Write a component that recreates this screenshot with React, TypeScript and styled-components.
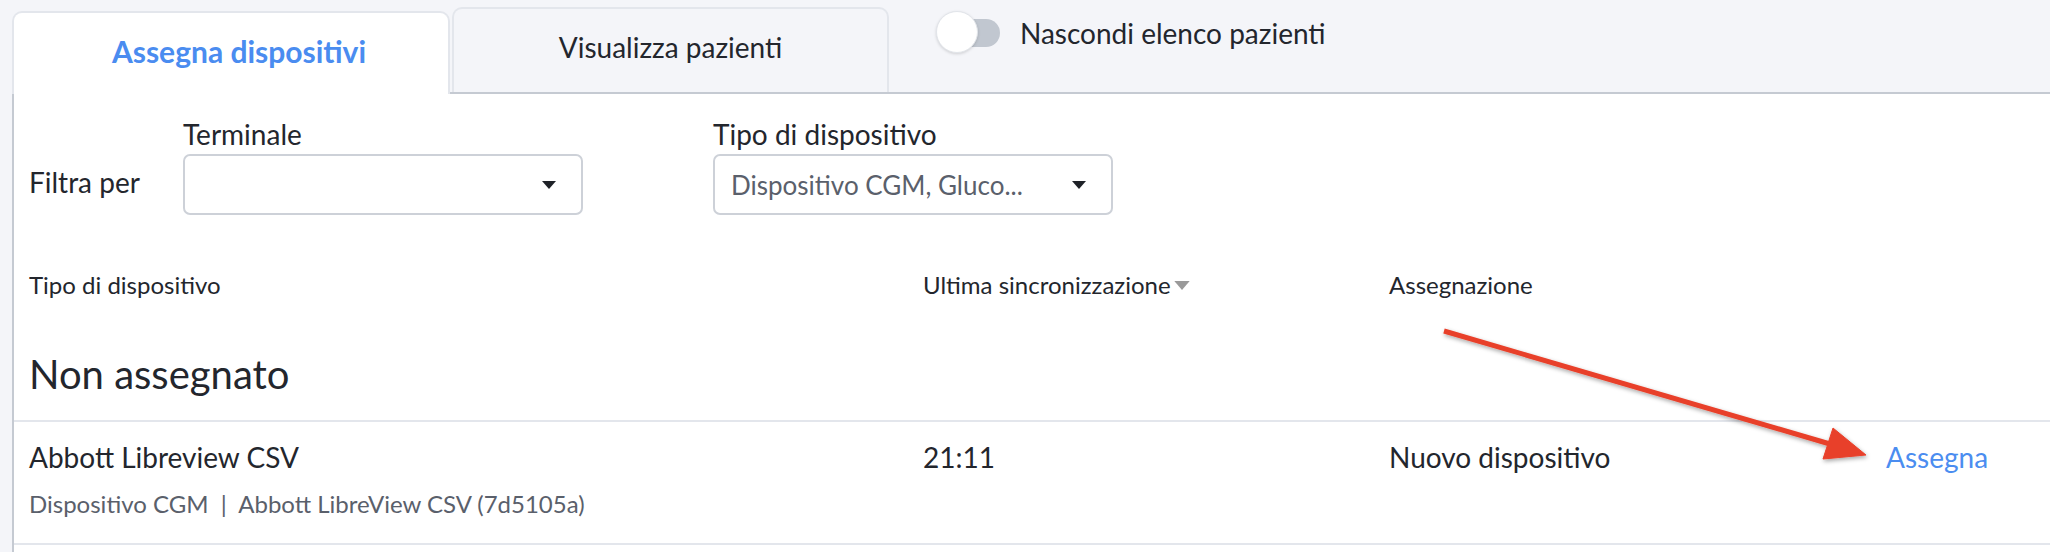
import React, { useState } from 'react';
import styled, { createGlobalStyle } from 'styled-components';

const GlobalStyle = createGlobalStyle`
  html, body {
    margin: 0;
    padding: 0;
    background: #f4f5f9;
    font-family: Lato, 'Noto Sans', sans-serif;
    color: #23262d;
  }
`;

type Device = {
  name: string;
  kind: string;
  model: string;
  lastSync: string;
  status: string;
};

const devices: Device[] = [
  {
    name: 'Abbott Libreview CSV',
    kind: 'Dispositivo CGM',
    model: 'Abbott LibreView CSV (7d5105a)',
    lastSync: '21:11',
    status: 'Nuovo dispositivo',
  },
];

const Caret = ({ color = '#1f2228' }: { color?: string }) => (
  <svg width="16" height="10" viewBox="0 0 16 10">
    <path d="M1 1 L15 1 L8 9 Z" fill={color} />
  </svg>
);

const Select: React.FC<{ label: string; value?: string }> = ({ label, value }) => (
  <S.Field>
    <S.FieldLabel>{label}</S.FieldLabel>
    <S.SelectBox>
      <S.SelectValue>{value}</S.SelectValue>
      <Caret />
    </S.SelectBox>
  </S.Field>
);

export default function App() {
  const [tab, setTab] = useState(0);
  const [hidden, setHidden] = useState(false);

  return (
    <S.Page>
      <GlobalStyle />
      <S.TabBar>
        <S.Tab $active={tab === 0} onClick={() => setTab(0)}>
          Assegna dispositivi
        </S.Tab>
        <S.Tab $active={tab === 1} onClick={() => setTab(1)}>
          Visualizza pazienti
        </S.Tab>
        <S.ToggleWrap onClick={() => setHidden(!hidden)}>
          <S.Track $on={hidden}>
            <S.Knob $on={hidden} />
          </S.Track>
          <span>Nascondi elenco pazienti</span>
        </S.ToggleWrap>
      </S.TabBar>

      <S.Panel>
        <S.Filters>
          <S.FilterTitle>Filtra per</S.FilterTitle>
          <Select label="Terminale" />
          <Select label="Tipo di dispositivo" value="Dispositivo CGM, Gluco..." />
        </S.Filters>

        <S.HeaderRow>
          <span>Tipo di dispositivo</span>
          <S.Sortable>
            Ultima sincronizzazione
            <Caret color="#9a9a9a" />
          </S.Sortable>
          <span>Assegnazione</span>
          <span />
        </S.HeaderRow>

        <S.GroupTitle>Non assegnato</S.GroupTitle>

        {devices.map((d) => (
          <S.DeviceRow key={d.name}>
            <S.Cell>
              <div>{d.name}</div>
              <S.Meta>
                {d.kind} &nbsp;|&nbsp; {d.model}
              </S.Meta>
            </S.Cell>
            <S.Cell>{d.lastSync}</S.Cell>
            <S.Cell>{d.status}</S.Cell>
            <S.Cell>
              <S.Link>Assegna</S.Link>
            </S.Cell>
          </S.DeviceRow>
        ))}
      </S.Panel>

      <S.Annotation width="470" height="160" viewBox="1420 310 470 160">
        <defs>
          <filter id="shadow" x="-10%" y="-30%" width="120%" height="160%">
            <feDropShadow dx="1" dy="2" stdDeviation="2" floodColor="#000" floodOpacity="0.35" />
          </filter>
        </defs>
        <g filter="url(#shadow)" fill="#e8402a" stroke="#e8402a">
          <line x1="1444" y1="331" x2="1830" y2="444" strokeWidth="5" />
          <polygon points="1866,455 1823,459 1833,428" strokeWidth="1" />
        </g>
      </S.Annotation>
    </S.Page>
  );
}

const S = {
  Page: styled.div`
    position: relative;
    width: 2050px;
    height: 552px;
    padding-left: 12px;
    box-sizing: border-box;
    overflow: hidden;
  `,
  TabBar: styled.div`
    display: flex;
    align-items: flex-end;
    gap: 2px;
    height: 94px;
    box-sizing: border-box;
    border-bottom: 2px solid #c5cad2;
  `,
  Tab: styled.div<{ $active?: boolean }>`
    display: flex;
    align-items: center;
    justify-content: center;
    box-sizing: border-box;
    width: ${(p) => (p.$active ? '438px' : '437px')};
    height: ${(p) => (p.$active ? '83px' : '85px')};
    margin-bottom: ${(p) => (p.$active ? '-2px' : '0')};
    padding: ${(p) => (p.$active ? '0 0 6px 16px' : '0 0 8px 0')};
    border: 2px solid #e3e6ec;
    border-bottom: none;
    border-radius: 10px 10px 0 0;
    background: ${(p) => (p.$active ? '#ffffff' : '#f4f5f9')};
    color: ${(p) => (p.$active ? '#4a8cf0' : '#23262d')};
    font-size: ${(p) => (p.$active ? '30px' : '28px')};
    font-weight: ${(p) => (p.$active ? 700 : 400)};
    cursor: pointer;
  `,
  ToggleWrap: styled.label`
    display: flex;
    align-items: center;
    gap: 20px;
    align-self: flex-start;
    margin-top: 16px;
    margin-left: 47px;
    font-size: 28px;
    cursor: pointer;
  `,
  Track: styled.div<{ $on: boolean }>`
    position: relative;
    width: 62px;
    height: 28px;
    border-radius: 14px;
    background: ${(p) => (p.$on ? '#4a8cf0' : '#c1c7d0')};
  `,
  Knob: styled.div<{ $on: boolean }>`
    position: absolute;
    top: -8px;
    left: ${(p) => (p.$on ? '22px' : '-2px')};
    width: 42px;
    height: 42px;
    box-sizing: border-box;
    border-radius: 50%;
    background: #ffffff;
    border: 1px solid #e2e5ea;
    box-shadow: 0 1px 3px rgba(0, 0, 0, 0.15);
  `,
  Panel: styled.div`
    background: #ffffff;
    border-left: 2px solid #c5cad2;
    height: 460px;
  `,
  Filters: styled.div`
    display: flex;
    align-items: flex-end;
    padding: 22px 0 0 15px;
  `,
  FilterTitle: styled.div`
    width: 154px;
    font-size: 28px;
    padding-bottom: 16px;
  `,
  Field: styled.div`
    display: flex;
    flex-direction: column;
    gap: 2px;
    margin-right: 130px;
  `,
  FieldLabel: styled.div`
    font-size: 28px;
    line-height: 36px;
  `,
  SelectBox: styled.div`
    display: flex;
    align-items: center;
    justify-content: space-between;
    box-sizing: border-box;
    width: 400px;
    height: 61px;
    padding: 0 24px 0 16px;
    border: 2px solid #cdd1d8;
    border-radius: 7px;
    background: #ffffff;
  `,
  SelectValue: styled.span`
    font-size: 26px;
    color: #5a606b;
  `,
  HeaderRow: styled.div`
    display: grid;
    grid-template-columns: 894px 466px 497px 1fr;
    align-items: center;
    padding: 55px 0 0 15px;
    font-size: 24px;
    line-height: 30px;
  `,
  Sortable: styled.span`
    display: flex;
    align-items: center;
    gap: 2px;
    svg {
      width: 18px;
      height: 11px;
    }
  `,
  GroupTitle: styled.h2`
    margin: 0;
    padding: 50px 0 0 15px;
    height: 122px;
    box-sizing: border-box;
    font-size: 40px;
    font-weight: 400;
    line-height: 48px;
    border-bottom: 2px solid #e3e6ec;
  `,
  DeviceRow: styled.div`
    display: grid;
    grid-template-columns: 894px 466px 497px 1fr;
    align-items: start;
    padding: 16px 0 0 15px;
    height: 123px;
    box-sizing: border-box;
    font-size: 28px;
    line-height: 38px;
    border-bottom: 2px solid #e3e6ec;
  `,
  Cell: styled.div`
    display: flex;
    flex-direction: column;
    gap: 13px;
  `,
  Meta: styled.div`
    font-size: 24px;
    line-height: 30px;
    color: #5a606b;
  `,
  Link: styled.a`
    color: #4b8df0;
    cursor: pointer;
  `,
  Annotation: styled.svg`
    position: absolute;
    left: 1420px;
    top: 310px;
    pointer-events: none;
  `,
};
